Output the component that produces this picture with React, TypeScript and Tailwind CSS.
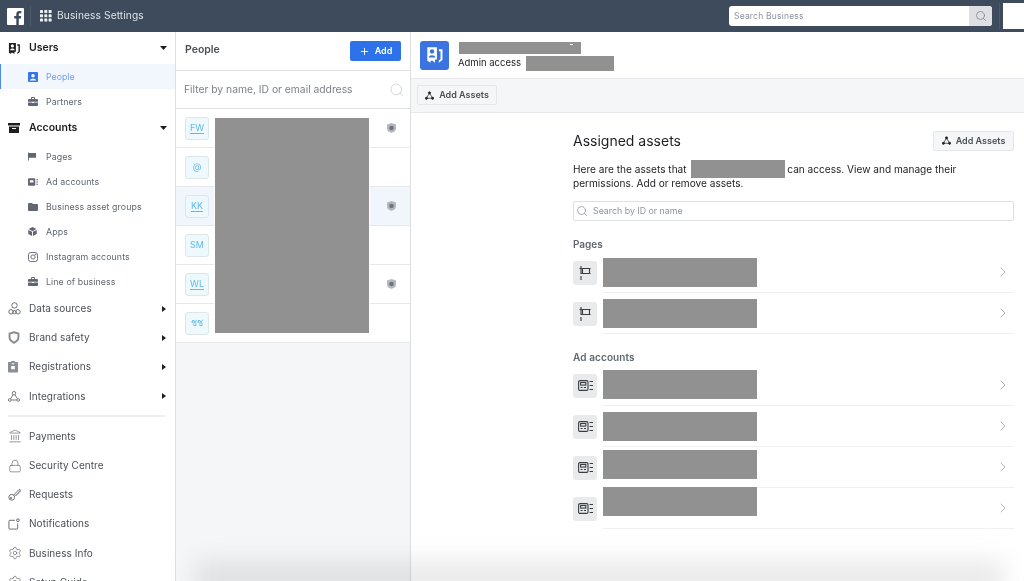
import { ChevronRight, Landmark, Lock, Plus, Search, Settings } from "lucide-react";
import type { ReactNode } from "react";

const FONT = "font-['Inter','Liberation_Sans',sans-serif]";

const Caret = ({ open }: { open?: boolean }) =>
  open ? (
    <svg width="7" height="4" viewBox="0 0 7 4" className="text-[#1c1e21]">
      <path d="M0 0h7L3.5 4z" fill="currentColor" />
    </svg>
  ) : (
    <svg width="4" height="6" viewBox="0 0 4 6" className="text-[#1c1e21]">
      <path d="M0 0l4 3-4 3z" fill="currentColor" />
    </svg>
  );

const UsersIcon = ({ className, cut = "#fff" }: { className?: string; cut?: string }) => (
  <svg viewBox="0 0 14 14" className={className} fill="currentColor">
    <path d="M1 1h7.500v9.500H7V13L5 11.500H3.500V13L1 11.500z" />
    <circle cx="4.700" cy="4.200" r="1.700" fill={cut} />
    <path d="M2.200 9c0-2.500 5-2.500 5 0z" fill={cut} />
    <path d="M10 2.500h2.800v8.300L10 13v-1.800l1.300-1V4H10z" />
  </svg>
);

const PersonIcon = () => (
  <svg viewBox="0 0 10 10" className="w-[10px] h-[10px] text-[#3578e5]" fill="currentColor">
    <path d="M1 0h8a1 1 0 0 1 1 1v8a1 1 0 0 1-1 1H1a1 1 0 0 1-1-1V1a1 1 0 0 1 1-1z" />
    <circle cx="5" cy="3.700" r="1.700" fill="#fff" />
    <path d="M1.800 8.500C2 6 8 6 8.200 8.500z" fill="#fff" />
  </svg>
);

const BriefcaseIcon = () => (
  <svg viewBox="0 0 10 9" className="w-[10px] h-[9px] text-[#606770]" fill="currentColor">
    <path d="M3 2V1a1 1 0 0 1 1-1h2a1 1 0 0 1 1 1v1h2a1 1 0 0 1 1 1v1.800H0V3a1 1 0 0 1 1-1zm1 0h2V1H4zM0 5.500h4V6h2v-.5h4V8a1 1 0 0 1-1 1H1a1 1 0 0 1-1-1z" />
  </svg>
);

const ArchiveIcon = () => (
  <svg viewBox="0 0 12 12" className="w-[12px] h-[12px] text-[#1c1e21]" fill="currentColor">
    <path d="M0 1h12v2.600H0zM1 4.400h10V11H1zM4 6v1h4V6z" fillRule="evenodd" />
  </svg>
);

const FlagIcon = () => (
  <svg viewBox="0 0 9 9" className="w-[8px] h-[9px] text-[#606770]" fill="currentColor">
    <path d="M0 0h1v9H0zM1 .5h8v5.500H1z" />
  </svg>
);

const AdSmallIcon = () => (
  <svg viewBox="0 0 11 8" className="w-[10px] h-[8px] text-[#606770]" fill="currentColor">
    <path d="M1 0h6a1 1 0 0 1 1 1v6a1 1 0 0 1-1 1H1a1 1 0 0 1-1-1V1a1 1 0 0 1 1-1zm1 2v2.500h4V2z" fillRule="evenodd" />
    <path d="M9.200 1H11v1H9.200zM9.200 3.500H11v1H9.200zM9.200 6H11v1H9.200z" />
  </svg>
);

const FolderIcon = () => (
  <svg viewBox="0 0 10 8" className="w-[10px] h-[8px] text-[#606770]" fill="currentColor">
    <path d="M1 0h3l1 1h4a1 1 0 0 1 1 1v5a1 1 0 0 1-1 1H1a1 1 0 0 1-1-1V1a1 1 0 0 1 1-1z" />
  </svg>
);

const CubeIcon = () => (
  <svg viewBox="0 0 10 10" className="w-[9px] h-[9px] text-[#606770]" fill="currentColor">
    <path d="M5 0l4.300 2.300L5 4.600.7 2.300zM.3 3.200l4.200 2.200V10L.3 7.700zM9.700 3.200v4.500L5.500 10V5.400z" />
  </svg>
);

const InstaIcon = () => (
  <svg viewBox="0 0 10 10" className="w-[10px] h-[10px] text-[#606770]" fill="none" stroke="currentColor" strokeWidth="0.9">
    <rect x="0.500" y="0.500" width="9" height="9" rx="2.200" />
    <circle cx="5" cy="5" r="2.100" />
    <circle cx="7.600" cy="2.400" r="0.400" fill="currentColor" />
  </svg>
);

const DataIcon = () => (
  <svg viewBox="0 0 13 13" className="w-[13px] h-[13px]" fill="none" stroke="currentColor" strokeWidth="0.9">
    <circle cx="6.500" cy="3.400" r="2.700" />
    <circle cx="3" cy="9.800" r="2.200" />
    <circle cx="10" cy="9.800" r="2.200" />
    <circle cx="6.500" cy="10.200" r="1.700" />
  </svg>
);

const ShieldIcon = () => (
  <svg viewBox="0 0 12 13" className="w-[12px] h-[13px] text-[#8a8e95]" fill="none" stroke="currentColor" strokeWidth="2">
    <path d="M6 1.200l4.400 1.400v4c0 2.200-1.800 4-4.400 5.200-2.600-1.200-4.400-3-4.400-5.200v-4z" />
  </svg>
);

const ClipboardIcon = () => (
  <svg viewBox="0 0 11 13" className="w-[10px] h-[13px] text-[#8a8e95]" fill="currentColor">
    <path d="M1 1.500h2.500V.5h4v1H10a1 1 0 0 1 1 1V12a1 1 0 0 1-1 1H1a1 1 0 0 1-1-1V2.500a1 1 0 0 1 1-1zM4 3v1h3V3zM3.500 6v3.500h4V6z" fillRule="evenodd" />
  </svg>
);

const NodesIcon = ({ className }: { className?: string }) => (
  <svg viewBox="0 0 13 12" className={className} fill="none" stroke="currentColor" strokeWidth="1">
    <path d="M6.500 2.500L2 10h9z" />
    <circle cx="6.500" cy="2.200" r="1.600" fill="currentColor" />
    <circle cx="2" cy="10" r="1.600" fill="currentColor" />
    <circle cx="11" cy="10" r="1.600" fill="currentColor" />
  </svg>
);

const OpenNodesIcon = () => (
  <svg viewBox="0 0 13 12" className="w-[12px] h-[11px]" fill="none" stroke="currentColor" strokeWidth="0.9">
    <circle cx="6.500" cy="2.400" r="1.900" />
    <circle cx="1.900" cy="9.800" r="1.500" />
    <circle cx="11.100" cy="9.800" r="1.500" />
    <path d="M5.500 4L2.700 8.500M7.500 4l2.800 4.500M3.400 9.800h6.200" />
  </svg>
);

const KeyIcon = () => (
  <svg viewBox="0 0 13 13" className="w-[13px] h-[13px]" fill="none" stroke="currentColor" strokeWidth="0.9">
    <circle cx="3.700" cy="9.300" r="2.900" />
    <circle cx="3" cy="10" r="0.700" />
    <path d="M5.600 7.200L11 1.500l1.200.4v1.700l-1.500.5-.2 1.400-1.400.3-.3 1.300-1.600.3" />
  </svg>
);

const NotifyIcon = () => (
  <svg viewBox="0 0 13 13" className="w-[12px] h-[12px]" fill="none" stroke="currentColor" strokeWidth="1">
    <path d="M7.500 2.500H2a1 1 0 0 0-1 1V11a1 1 0 0 0 1 1h7.500a1 1 0 0 0 1-1V6" />
    <circle cx="10.800" cy="2.400" r="1.500" />
  </svg>
);

const RowFlagIcon = () => (
  <svg viewBox="0 0 12 14" className="w-[12px] h-[14px] text-[#3a3d42]" fill="none" stroke="currentColor" strokeWidth="1.100">
    <path d="M2 0v8M2 10v4M.5 2.500h11M2 7.500h9.500M3.500 2.500v5M10.500 2.500v5" />
  </svg>
);

const RowAdIcon = () => (
  <svg viewBox="0 0 15 11" className="w-[15px] h-[11px] text-[#3a3d42]" fill="none" stroke="currentColor" strokeWidth="1.100">
    <rect x="0.600" y="0.600" width="9.400" height="9.800" rx="1.400" />
    <rect x="2.600" y="2.500" width="5.200" height="2.600" />
    <path d="M2.600 7.500h2M6 7.500h2M11.600 1.500H15M11.600 5.500H15M11.600 9.500H15" />
  </svg>
);

// dot next to the people who have a role set
const RoleDot = () => (
  <svg viewBox="0 0 9 10" className="w-[9px] h-[10px]">
    <path d="M4.500 0L9 1.600v4.200C9 8 6.500 9.400 4.500 10 2.500 9.400 0 8 0 5.800V1.600z" fill="#b4b7bd" />
    <circle cx="4.500" cy="5" r="2.300" fill="#70747b" />
  </svg>
);

const Redacted = ({ className }: { className: string }) => <div className={`absolute bg-[#919191] ${className}`} />;

const SubItem = ({ icon, label }: { icon: ReactNode; label: string }) => (
  <div className="h-[25px] shrink-0 flex items-center text-[8.8px] tracking-[0.1px] text-[#606770]">
    <span className="w-[46px] pl-[28px] flex items-center">{icon}</span>
    {label}
  </div>
);

const GroupHead = ({ icon, label, h }: { icon: ReactNode; label: string; h: string }) => (
  <div className={`${h} shrink-0 flex items-center pl-[8px] pr-[8px] text-[10.5px] font-semibold text-[#1c1e21]`}>
    <span className="w-[21px] flex items-center">{icon}</span>
    <span className="flex-1">{label}</span>
    <Caret open />
  </div>
);

const NavItem = ({ icon, label, caret }: { icon: ReactNode; label: string; caret?: boolean }) => (
  <div className="h-[29.2px] shrink-0 flex items-center pl-[8px] pr-[9px] text-[10px] tracking-[0.05px] text-[#4b4f56]">
    <span className="w-[21px] flex items-center text-[#5f6368]">{icon}</span>
    <span className="flex-1">{label}</span>
    {caret && <Caret />}
  </div>
);

function Sidebar() {
  return (
    <aside className="w-[176px] shrink-0 border-r border-[#dddfe2] flex flex-col bg-white overflow-hidden">
      <GroupHead h="h-[32px]" icon={<UsersIcon className="w-[13px] h-[13px] text-[#1c1e21]" />} label="Users" />
      <div className="h-[25px] shrink-0 flex items-center bg-[#f2f7fd] border-l border-[#4f8be8] text-[8.8px] text-[#6f9ff0]">
        <span className="w-[45px] pl-[27px] flex items-center">
          <PersonIcon />
        </span>
        People
      </div>
      <SubItem icon={<BriefcaseIcon />} label="Partners" />
      <GroupHead h="h-[28px] mb-[2px]" icon={<ArchiveIcon />} label="Accounts" />
      <SubItem icon={<FlagIcon />} label="Pages" />
      <SubItem icon={<AdSmallIcon />} label="Ad accounts" />
      <SubItem icon={<FolderIcon />} label="Business asset groups" />
      <SubItem icon={<CubeIcon />} label="Apps" />
      <SubItem icon={<InstaIcon />} label="Instagram accounts" />
      <SubItem icon={<BriefcaseIcon />} label="Line of business" />
      <NavItem icon={<DataIcon />} label="Data sources" caret />
      <NavItem icon={<ShieldIcon />} label="Brand safety" caret />
      <NavItem icon={<ClipboardIcon />} label="Registrations" caret />
      <NavItem icon={<OpenNodesIcon />} label="Integrations" caret />
      <div className="h-[2px] shrink-0 bg-[#eeeff1] ml-[8px] mr-[10px] mt-[4px] mb-[5px]" />
      <NavItem icon={<Landmark size={14} strokeWidth={1.1} />} label="Payments" />
      <NavItem icon={<Lock size={14} strokeWidth={1.1} />} label="Security Centre" />
      <NavItem icon={<KeyIcon />} label="Requests" />
      <NavItem icon={<NotifyIcon />} label="Notifications" />
      <NavItem icon={<Settings size={14} strokeWidth={1.1} />} label="Business Info" />
      <NavItem icon={<Settings size={14} strokeWidth={1.1} />} label="Setup Guide" />
    </aside>
  );
}

const people = [
  { initials: "FW", underline: true, role: true },
  { initials: "@", underline: false, role: false },
  { initials: "KK", underline: true, role: true, active: true },
  { initials: "SM", underline: false, role: false },
  { initials: "WL", underline: true, role: true },
  { initials: "ชช", underline: false, role: false },
];

function PeoplePanel() {
  return (
    <section className="relative w-[235px] shrink-0 border-r border-[#dddfe2] bg-[#f5f6f7] flex flex-col">
      <div className="h-[39px] bg-white border-b border-[#dddfe2] flex items-center justify-between pl-[9px] pr-[9px]">
        <span className="text-[10.5px] font-semibold text-[#4b4f56] -mt-[2px]">People</span>
        <button type="button" className="w-[51px] h-[20px] bg-[#2d72e8] rounded-[2px] text-white text-[9px] font-semibold flex items-center justify-center gap-[5px]">
          <Plus size={11} strokeWidth={2} />
          Add
        </button>
      </div>
      <div className="h-[38px] bg-white border-b border-[#dddfe2] flex items-center justify-between pl-[8px] pr-[5px]">
        <span className="text-[10.3px] text-[#7d828a]">Filter by name, ID or email address</span>
        <Search size={16} strokeWidth={1.1} className="text-[#c4c7cc]" />
      </div>
      {people.map((p) => (
        <div
          key={p.initials}
          className={`h-[39px] border-b border-[#e6e8eb] flex items-center justify-between pl-[9px] pr-[14px] ${p.active ? "bg-[#f1f6fd]" : "bg-white"}`}
        >
          <span className="w-[24px] h-[23px] bg-[#eef9fd] border border-[#dfe6ea] rounded-[3px] flex items-center justify-center text-[9px] text-[#62b8e9]">
            <span className={p.underline ? "border-b border-[#62b8e9] leading-[11px]" : ""}>{p.initials}</span>
          </span>
          {p.role && <RoleDot />}
        </div>
      ))}
      <Redacted className="left-[39px] top-[86px] w-[154px] h-[215px] shadow-[0_0_0_1px_#fff]" />
    </section>
  );
}

const AddAssets = ({ className }: { className: string }) => (
  <button type="button" className={`h-[20px] bg-[#f5f6f7] border border-[#e6e7ea] rounded-[2px] text-[9px] font-semibold text-[#4b4f56] flex items-center justify-center gap-[5px] ${className}`}>
    <NodesIcon className="w-[9px] h-[9px] text-[#1c1e21]" />
    Add Assets
  </button>
);

const AssetRow = ({ icon, blockTop }: { icon: ReactNode; blockTop: string }) => (
  <div className="h-[41px] flex items-center">
    <span className="w-[24px] h-[24px] bg-[#e9eaeb] rounded-[3px] flex items-center justify-center">{icon}</span>
    <div className="relative ml-[6px] flex-1 h-full border-b border-[#eff0f1] flex items-center justify-end pr-[3px]">
      <Redacted className={`left-0 w-[154px] h-[29px] ${blockTop}`} />
      <ChevronRight size={16} strokeWidth={1} className="text-[#8d949e]" />
    </div>
  </div>
);

function DetailPanel() {
  return (
    <main className="relative flex-1 min-w-0 flex flex-col bg-white">
      <div className="relative h-[46px] shrink-0 flex items-center pl-[9px]">
        <span className="w-[29px] h-[29px] rounded-[3px] bg-[#3b74e0] flex items-center justify-center">
          <UsersIcon className="w-[18px] h-[18px] text-white" cut="#3b74e0" />
        </span>
        <span className="ml-[9px] mt-[17px] text-[9.5px] text-[#1c1e21]">Admin access</span>
        <Redacted className="left-[48px] top-[10px] w-[122px] h-[12px]" />
        <div className="absolute left-[159px] top-[12px] w-[3px] h-[1px] bg-white" />
        <Redacted className="left-[115px] top-[24px] w-[88px] h-[15px]" />
      </div>
      <div className="h-[35px] shrink-0 bg-[#f5f6f7] border-y border-[#e6e7ea] flex items-center pl-[6px]">
        <AddAssets className="w-[80px] -mt-[1px]" />
      </div>
      <div className="w-[441px] ml-[162px] flex flex-col">
        <div className="mt-[17px] h-[22px] flex items-center justify-between">
          <h1 className="text-[14px] leading-[22px] text-[#1c1e21]">Assigned assets</h1>
          <AddAssets className="w-[81px] -mt-[1px]" />
        </div>
        <div className="relative mt-[10px] text-[10.1px] leading-[14px] text-[#1c1e21]">
          <p>
            Here are the assets that <span className="inline-block w-[95px]" /> can access. View and manage their
            <br />
            permissions. Add or remove assets.
          </p>
          <Redacted className="left-[118px] -top-[2px] w-[94px] h-[18px]" />
        </div>
        <div className="mt-[11px] h-[20px] border border-[#dddfe2] rounded-[2px] flex items-center pl-[2px] gap-[5px] text-[8.8px] text-[#8d949e]">
          <Search size={12} strokeWidth={1.300} className="text-[#7d828a]" />
          Search by ID or name
        </div>
        <h2 className="mt-[17px] h-[14px] text-[10px] leading-[12px] font-semibold text-[#606770]">Pages</h2>
        <AssetRow icon={<RowFlagIcon />} blockTop="top-[6px]" />
        <AssetRow icon={<RowFlagIcon />} blockTop="top-[6px]" />
        <h2 className="mt-[17px] h-[14px] text-[10px] leading-[12px] font-semibold tracking-[0.1px] text-[#606770]">Ad accounts</h2>
        <AssetRow icon={<RowAdIcon />} blockTop="top-[5px]" />
        <AssetRow icon={<RowAdIcon />} blockTop="top-[6px]" />
        <AssetRow icon={<RowAdIcon />} blockTop="top-[3px]" />
        <AssetRow icon={<RowAdIcon />} blockTop="-top-[1px]" />
      </div>
    </main>
  );
}

export default function App() {
  return (
    <div className={`relative w-[1024px] h-[581px] overflow-hidden flex flex-col bg-white ${FONT}`}>
      <header className="h-[32px] shrink-0 bg-[#3d4b5d] flex items-center pl-[7px]">
        <svg viewBox="0 0 17 17" className="w-[17px] h-[17px]">
          <rect width="17" height="17" rx="1" fill="#fff" />
          <path d="M11.800 17v-6.400h2.100l.3-2.500h-2.400V6.500c0-.7.2-1.200 1.200-1.200h1.300V3.100c-.2 0-1-.1-1.900-.1-1.900 0-3.100 1.100-3.100 3.200v1.900H7.200v2.500h2.100V17z" fill="#3d4b5d" />
        </svg>
        <div className="w-px h-[20px] bg-[#4d5a6b] ml-[6px]" />
        <svg viewBox="0 0 12 12" className="w-[12px] h-[12px] ml-[9px] text-[#eef0f2]" fill="currentColor">
          {[0, 1, 2].flatMap((r) =>
            [0, 1, 2].map((c) => <rect key={`${r}-${c}`} x={c * 4.3} y={r * 4.3} width="3" height="3" rx="0.6" />),
          )}
        </svg>
        <span className="ml-[5px] text-[10.2px] tracking-[0.1px] text-[#dfe3e8]">Business Settings</span>
        <div className="ml-auto w-[263px] h-[20px] bg-white rounded-[3px] overflow-hidden flex items-center">
          <span className="flex-1 pl-[5px] text-[8.5px] tracking-[0.2px] text-[#8d949e]">Search Business</span>
          <span className="w-[23px] h-full bg-[#dddfe2] flex items-center justify-center">
            <Search size={12} strokeWidth={1.500} className="text-[#7d828a]" />
          </span>
        </div>
        <div className="w-px h-[26px] bg-[#4d5a6b] ml-[7px]" />
        <div className="w-[21px] h-[26px] bg-white ml-[3px]" />
      </header>
      <div className="flex-1 min-h-0 flex">
        <Sidebar />
        <PeoplePanel />
        <DetailPanel />
      </div>
      {/* soft shadow along the bottom of the capture */}
      <div className="absolute left-[195px] right-[20px] -bottom-[14px] h-[34px] bg-[#e9e9e9] blur-[12px] mix-blend-multiply pointer-events-none" />
    </div>
  );
}
